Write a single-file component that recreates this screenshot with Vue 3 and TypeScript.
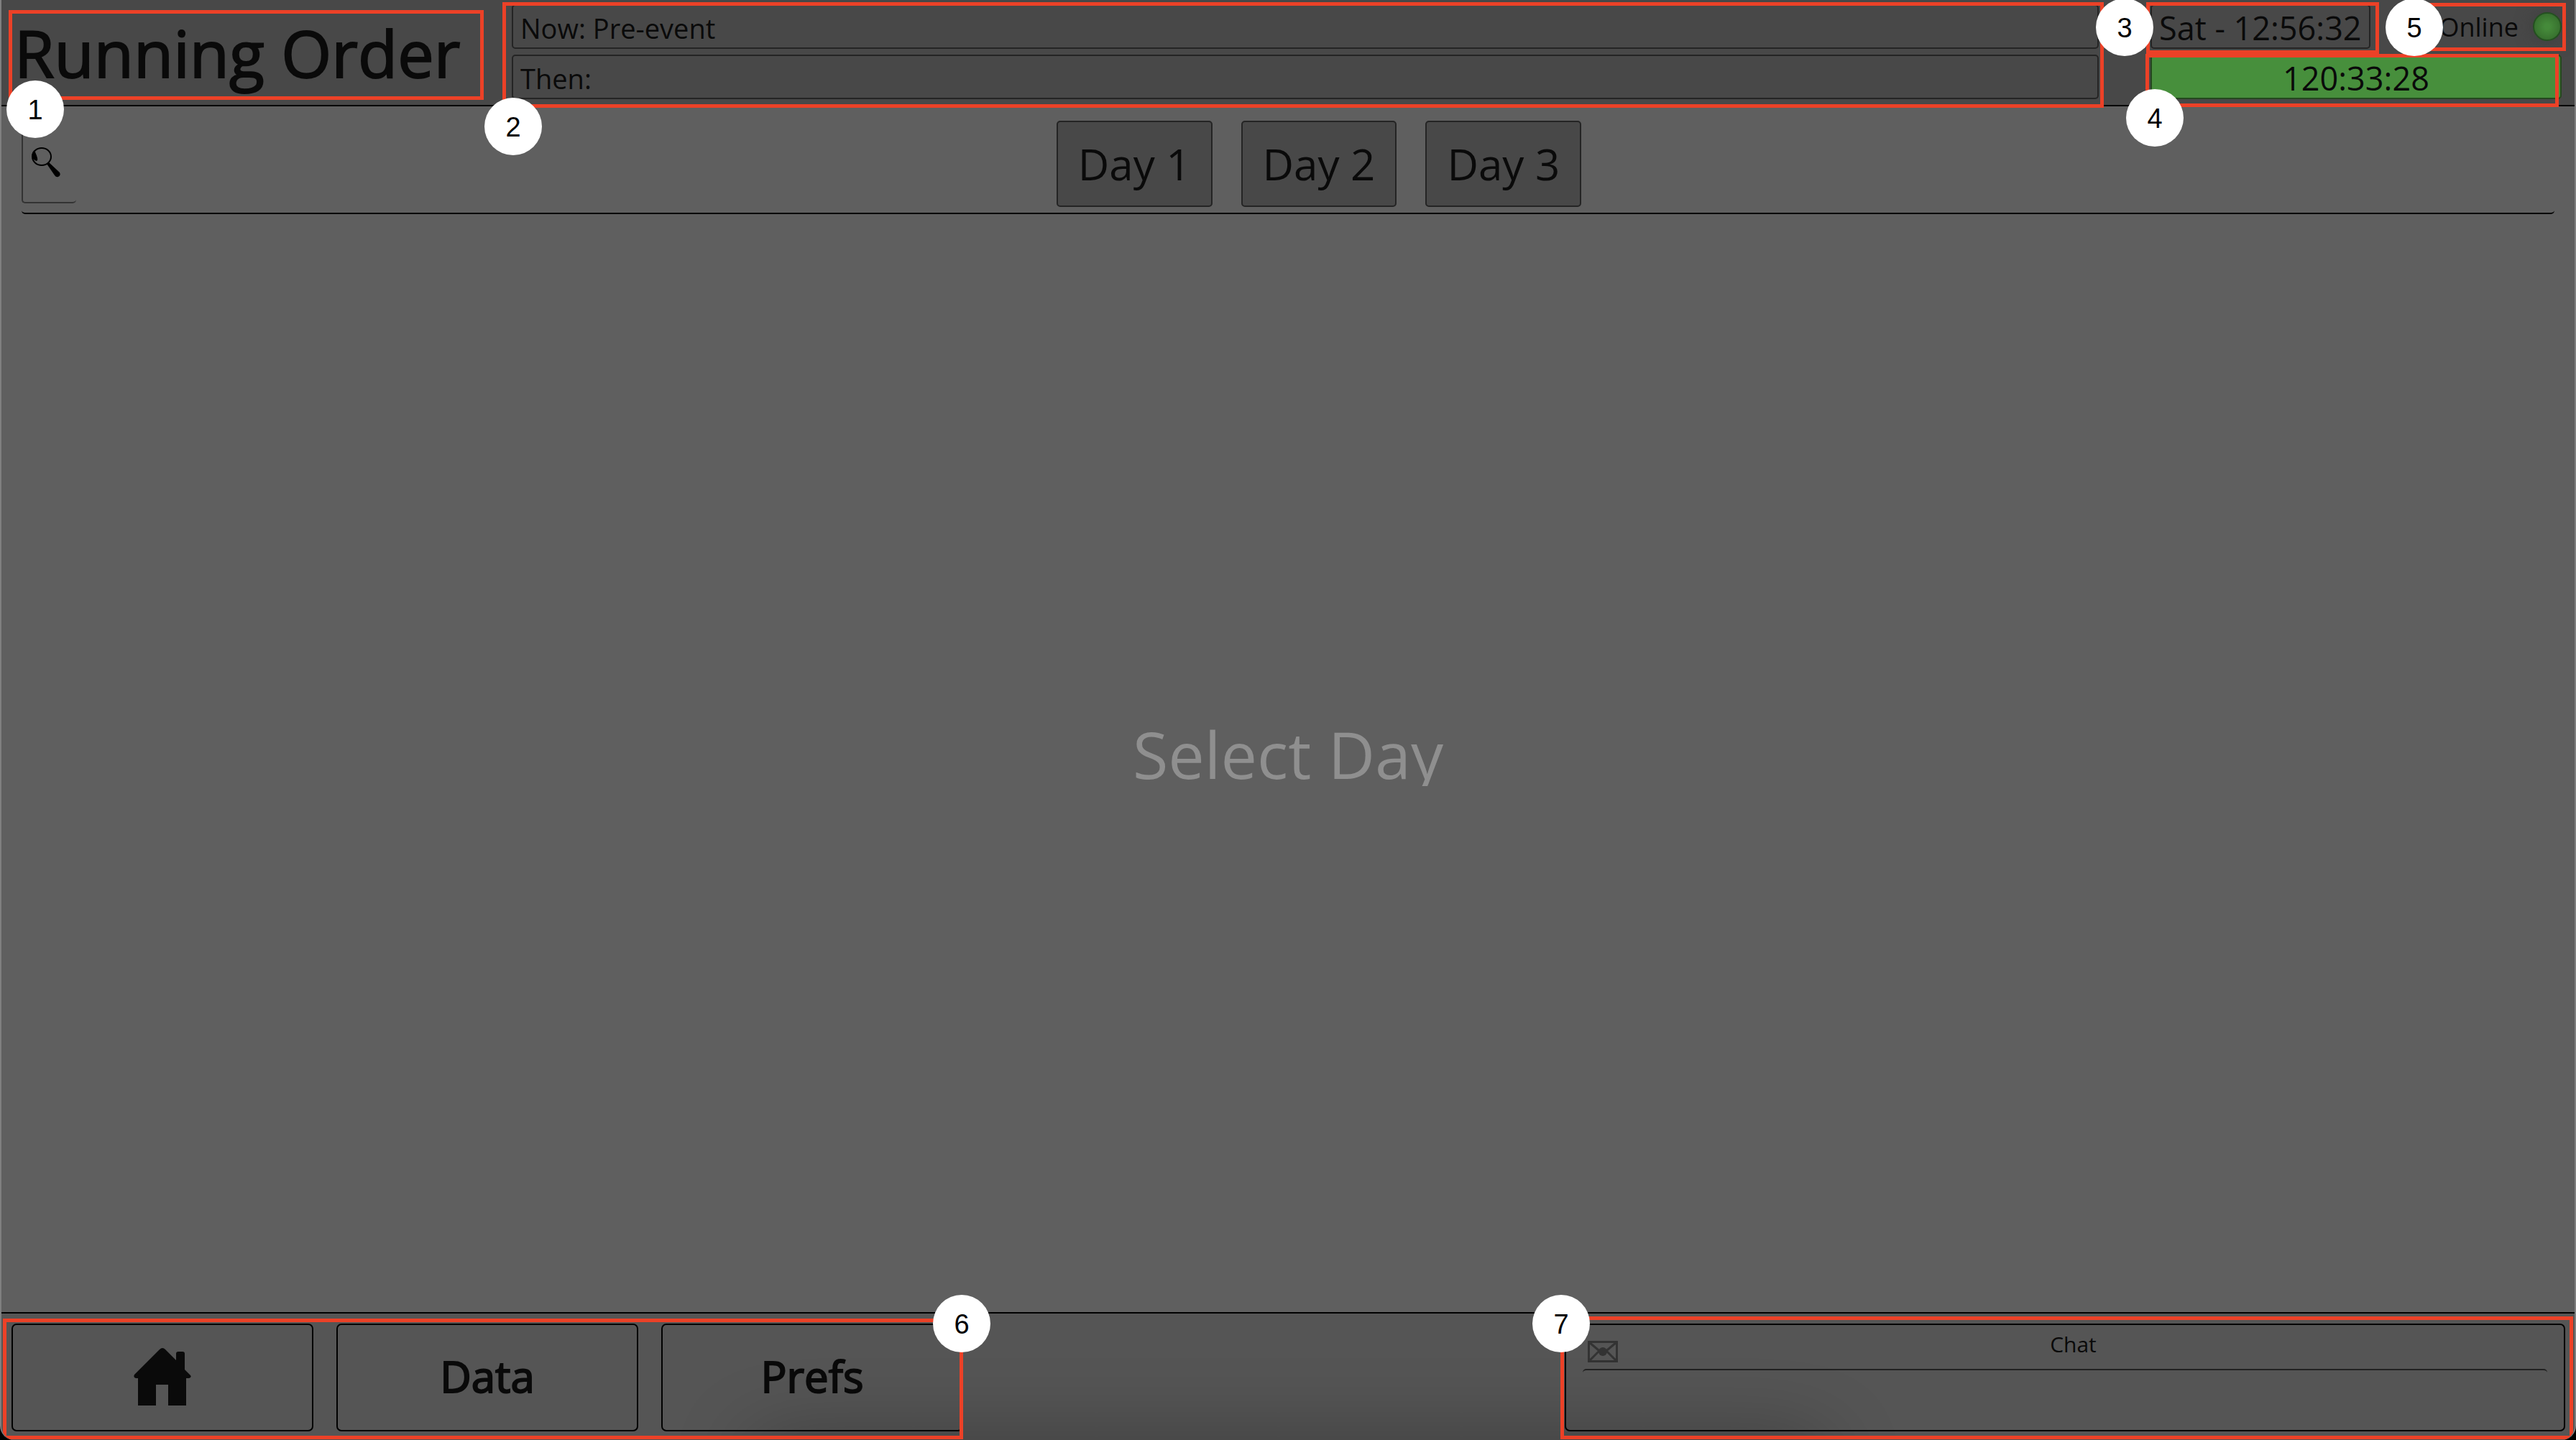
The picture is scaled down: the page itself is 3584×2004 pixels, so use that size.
<script setup lang="ts">
interface Marker {
  id: number
  box: string
}

const days: string[] = ['Day 1', 'Day 2', 'Day 3']
const markers: Marker[] = [1, 2, 3, 4, 5, 6, 7].map((id) => ({ id, box: `mark-${id}` }))
</script>

<template>
  <div class="app">
    <header class="header">
      <h1 class="title">Running Order</h1>
      <div class="programme">
        <div class="field">Now: Pre-event</div>
        <div class="field">Then:</div>
      </div>
      <div class="status">
        <div class="status-row">
          <time class="field clock">Sat - 12:56:32</time>
          <div class="online">Online<span class="led"></span></div>
        </div>
        <div class="field countdown">120:33:28</div>
      </div>
    </header>

    <main class="main">
      <div class="toolbar">
        <button class="search" type="button" aria-label="Search">
          <svg class="search-icon" viewBox="0 0 42 42">
            <ellipse cx="15" cy="13" rx="13" ry="12" fill="none" stroke="#000" stroke-width="2" />
            <path d="M5 4C-1 9 1 17 8 19C11 17 8 12 5 4Z" fill="#000" />
            <path d="M22 23L25 21L40 35Q42 39 38 41Q35 42 33 39Z" fill="#000" />
          </svg>
        </button>
        <nav class="days">
          <button v-for="day in days" :key="day" class="day" type="button">{{ day }}</button>
        </nav>
      </div>
      <div class="stage">
        <p class="prompt">Select Day</p>
      </div>
    </main>

    <footer class="footer">
      <nav class="menu">
        <button class="menu-button" type="button" aria-label="Home">
          <svg class="home-icon" viewBox="0 0 80 80">
            <path d="M36 2Q40 -2 44 2L59 17V8Q59 5 62 5H68Q71 5 71 8V30L79 38Q81 41 77 42H73V80H48V51H31V80H6V42H3Q-1 41 1 37Z" fill="#0a0a0a" />
          </svg>
        </button>
        <button class="menu-button" type="button">Data</button>
        <button class="menu-button" type="button">Prefs</button>
      </nav>
      <section class="chat">
        <div class="chat-head">
          <svg class="mail-icon" viewBox="0 0 42 30">
            <g fill="none" stroke="#333" stroke-width="3">
              <path d="M1.500 1.500H40.500V28.500H1.500Z" />
              <path d="M2 2L21 18L40 2M2 28L16 14M40 28L26 14" />
            </g>
            <circle cx="21" cy="15" r="6" fill="#333" />
          </svg>
          <h2 class="chat-title">Chat</h2>
        </div>
        <div class="chat-body"></div>
      </section>
    </footer>

    <div v-for="marker in markers" :key="marker.id" class="mark" :class="marker.box">
      <span class="badge">{{ marker.id }}</span>
    </div>
  </div>
</template>

<style>
body {
  margin: 0;
  background: #000;
}
</style>

<style scoped>
.app {
  position: relative;
  display: flex;
  flex-direction: column;
  box-sizing: border-box;
  min-height: 100vh;
  overflow: hidden;
  border: solid #808080;
  border-width: 0 2px;
  border-radius: 0 0 20px 20px;
  background: #5f5f5f;
  color: #0a0a0a;
  font-family: "Open Sans", "Noto Sans", sans-serif;
  font-size: 38px;
}

button {
  margin: 0;
  color: inherit;
  font-family: inherit;
}

.header {
  display: flex;
  box-sizing: border-box;
  height: 148px;
  padding: 6px 18px 0;
  border-bottom: 2px solid #000;
  background: #484848;
}

.title {
  width: 692px;
  margin: 0;
  font-size: 90px;
  font-weight: 400;
  line-height: 134px;
  -webkit-text-stroke: 2px #0a0a0a;
}

.programme {
  display: flex;
  flex: 1;
  flex-direction: column;
  gap: 8px;
}

.field {
  box-sizing: border-box;
  height: 62px;
  padding: 0 10px;
  border: 2px solid #242424;
  border-radius: 5px;
  line-height: 62px;
}

.status {
  display: flex;
  flex-direction: column;
  gap: 8px;
  width: 572px;
  margin-left: 72px;
}

.status-row {
  display: flex;
  justify-content: space-between;
}

.clock,
.countdown {
  font-size: 45px;
}

.countdown {
  border-color: #24481e;
  background: #478f3c;
  text-align: center;
}

.online {
  display: flex;
  align-items: center;
  gap: 20px;
  height: 62px;
  font-size: 36px;
}

.led {
  box-sizing: border-box;
  width: 40px;
  height: 40px;
  border: 2px solid #245020;
  border-radius: 50%;
  background: radial-gradient(circle closest-side, #458a3a 20%, #38712f 100%);
  box-shadow: 0 0 24px #3e3e3e;
}

.main {
  display: flex;
  flex: 1;
  flex-direction: column;
}

.toolbar {
  display: flex;
  gap: 10px;
  height: 148px;
  margin: 0 28px;
  border-bottom: 2px solid #000;
  border-radius: 5px;
}

.search {
  width: 76px;
  height: 120px;
  margin-top: 15px;
  padding: 8px 0 0 11px;
  border: 0 solid #333;
  border-width: 0 0 2px 2px;
  border-radius: 5px;
  background: none;
  text-align: left;
}

.search-icon {
  display: block;
  width: 42px;
  height: 42px;
}

.days {
  display: flex;
  flex: 1;
  justify-content: center;
  gap: 40px;
  padding-top: 20px;
}

.day {
  height: 120px;
  padding: 0 28px;
  border: 2px solid #242424;
  border-radius: 5px;
  background: #484848;
  font-size: 60px;
  line-height: 116px;
}

.stage {
  display: flex;
  flex: 1;
  align-items: center;
  justify-content: center;
}

.prompt {
  height: 90px;
  margin: 0 0 26px;
  overflow: hidden;
  color: #8f8f8f;
  font-size: 90px;
  line-height: 90px;
}

.footer {
  position: relative;
  display: flex;
  justify-content: space-between;
  box-sizing: border-box;
  height: 178px;
  padding: 14px 13px 0 14px;
  border-top: 2px solid #000;
  background: #555;
}

/* Soft shade along the bottom edge, behind nothing but the bar itself. */
.footer::after {
  position: absolute;
  top: 100%;
  right: 29%;
  left: 29%;
  height: 80px;
  border-radius: 40px;
  box-shadow: 0 0 110px rgba(0, 0, 0, 0.32);
  content: "";
  pointer-events: none;
}

.menu {
  display: flex;
  gap: 32px;
}

.menu-button {
  width: 420px;
  height: 150px;
  padding: 0 0 4px;
  border: 2px solid #000;
  border-radius: 7px;
  background: none;
  font-size: 60px;
  -webkit-text-stroke: 2px #0a0a0a;
}

.home-icon {
  display: block;
  width: 80px;
  height: 80px;
  margin: 2px auto 0;
}

.chat {
  box-sizing: border-box;
  width: 1392px;
  height: 150px;
  padding: 0 23px;
  border: 2px solid #000;
  border-radius: 7px;
}

.chat-head {
  display: flex;
  align-items: center;
  height: 61px;
  padding-left: 7px;
}

.mail-icon {
  width: 42px;
  height: 30px;
  margin-top: 12px;
}

.chat-title {
  flex: 1;
  align-self: flex-start;
  margin: 0;
  padding-right: 26px;
  font-size: 30px;
  font-weight: 400;
  line-height: 54px;
  text-align: center;
}

.chat-body {
  height: 60px;
  border-top: 2px solid #222;
  border-radius: 5px;
}

/* Numbered call-outs lie over the page. */
.mark {
  position: absolute;
  box-sizing: border-box;
  border: 5px solid #ec4127;
  pointer-events: none;
}

.badge {
  position: absolute;
  width: 80px;
  height: 80px;
  border-radius: 50%;
  background: #fff;
  color: #000;
  font: 38px/82px "Liberation Sans", Arial, sans-serif;
  text-align: center;
}

.mark-1 { top: 14px; left: 10px; width: 661px; height: 125px; }
.mark-1 .badge { top: 93px; left: -8px; }
.mark-2 { top: 3px; right: 655px; left: 697px; height: 147px; }
.mark-2 .badge { top: 128px; left: -30px; }
.mark-3 { top: 3px; right: 272px; width: 324px; height: 72px; }
.mark-3 .badge { top: -10px; left: -75px; }
.mark-4 { top: 75px; right: 22px; width: 575px; height: 74px; }
.mark-4 .badge { top: 44px; left: -32px; }
.mark-5 { top: 4px; right: 12px; width: 210px; height: 67px; }
.mark-5 .badge { top: -11px; left: -46px; }
.mark-6 { bottom: 1px; left: 2px; width: 1336px; height: 168px; }
.mark-6 .badge { top: -38px; right: -43px; }
.mark-7 { right: 2px; bottom: 1px; width: 1409px; height: 171px; }
.mark-7 .badge { top: -35px; left: -44px; }
</style>
